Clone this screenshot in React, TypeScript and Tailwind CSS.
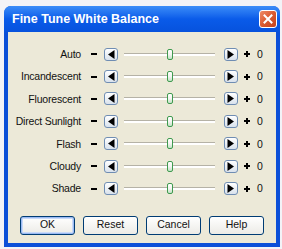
import React from "react";

const rows = ["Auto", "Incandescent", "Fluorescent", "Direct Sunlight", "Flash", "Cloudy", "Shade"];

function ArrowButton({ dir }: { dir: "left" | "right" }) {
  return (
    <div className="w-[14px] h-[13px] rounded-[3px] border border-[#6f8db3] bg-linear-to-b from-[#ffffff] to-[#d9e2ec] flex items-center justify-center">
      <svg width="8" height="9" viewBox="0 0 8 9">
        {dir === "left" ? <path d="M7.5 0 L7.5 9 L1 4.5 Z" fill="#000" /> : <path d="M0.5 0 L0.5 9 L7 4.5 Z" fill="#000" />}
      </svg>
    </div>
  );
}

function Row({ label }: { label: string }) {
  return (
    <div className="flex items-center h-[22.4px]">
      <div className="w-[73px] text-right text-[10.5px] tracking-[-0.2px] text-[#111] leading-none">{label}</div>
      <div className="ml-[10px] w-[6px] h-[2px] bg-black" />
      <div className="ml-[7px]">
        <ArrowButton dir="left" />
      </div>
      <div className="ml-[6px] w-[91px] h-[11px] relative flex items-center">
        <div className="w-full h-[3px] border-t border-[#b5b2a6] bg-white" />
        <div className="absolute left-[43px] top-0 w-[6px] h-[11px] rounded-[2px] border border-[#3f9a4f] bg-linear-to-b from-[#ffffff] via-[#f4f4f0] to-[#bfe2c3]" />
      </div>
      <div className="ml-[9px]">
        <ArrowButton dir="right" />
      </div>
      <div className="ml-[6px] w-[6px] h-[6px] relative">
        <div className="absolute left-0 top-[2px] w-[6px] h-[2px] bg-black" />
        <div className="absolute left-[2px] top-0 w-[2px] h-[6px] bg-black" />
      </div>
      <div className="ml-[7px] text-[10.5px] text-[#111] leading-none">0</div>
    </div>
  );
}

function Btn({ label, primary }: { label: string; primary?: boolean }) {
  return (
    <div
      className={
        "w-[55px] h-[19px] rounded-[3px] border border-[#003c74] flex items-center justify-center text-[10.5px] text-[#111] bg-linear-to-b from-[#ffffff] to-[#ecebe6] " +
        (primary ? "shadow-[inset_0_0_0_1px_#9bbaf3,inset_0_0_0_2px_#c9daf8]" : "")
      }
    >
      {label}
    </div>
  );
}

export default function App() {
  return (
    <div className="w-[282px] h-[249px] bg-[#f3f3f7] pt-[6px] pl-[4px]" style={{ fontFamily: '"Liberation Sans", Arial, sans-serif' }}>
      <div className="w-[276px] h-[241px] flex flex-col rounded-t-[7px] bg-[#0b4fd8] overflow-hidden">
        <div className="h-[26px] flex items-center justify-between pl-[8px] pr-[3px] bg-linear-to-b from-[#3b8cf8] via-[#0a5be9] to-[#0752dd]">
          <div className="text-white font-bold text-[12.5px] leading-none">Fine Tune White Balance</div>
          <div className="w-[18px] h-[18px] rounded-[3px] border border-white bg-linear-to-br from-[#ee8a66] via-[#db5a30] to-[#c4421c] flex items-center justify-center">
            <svg width="10" height="10" viewBox="0 0 10 10">
              <path d="M1.5 1.5 L8.5 8.5 M8.5 1.5 L1.5 8.5" stroke="#fff" strokeWidth="2" strokeLinecap="square" />
            </svg>
          </div>
        </div>
        <div className="flex-1 mx-[4px] mb-[4px] bg-[#ece9d8] flex flex-col">
          <div className="pt-[11px] flex flex-col">
            {rows.map((r) => (
              <Row key={r} label={r} />
            ))}
          </div>
          <div className="mt-[16px] pl-[12px] flex gap-[8px]">
            <Btn label="OK" primary />
            <Btn label="Reset" />
            <Btn label="Cancel" />
            <Btn label="Help" />
          </div>
        </div>
      </div>
    </div>
  );
}
